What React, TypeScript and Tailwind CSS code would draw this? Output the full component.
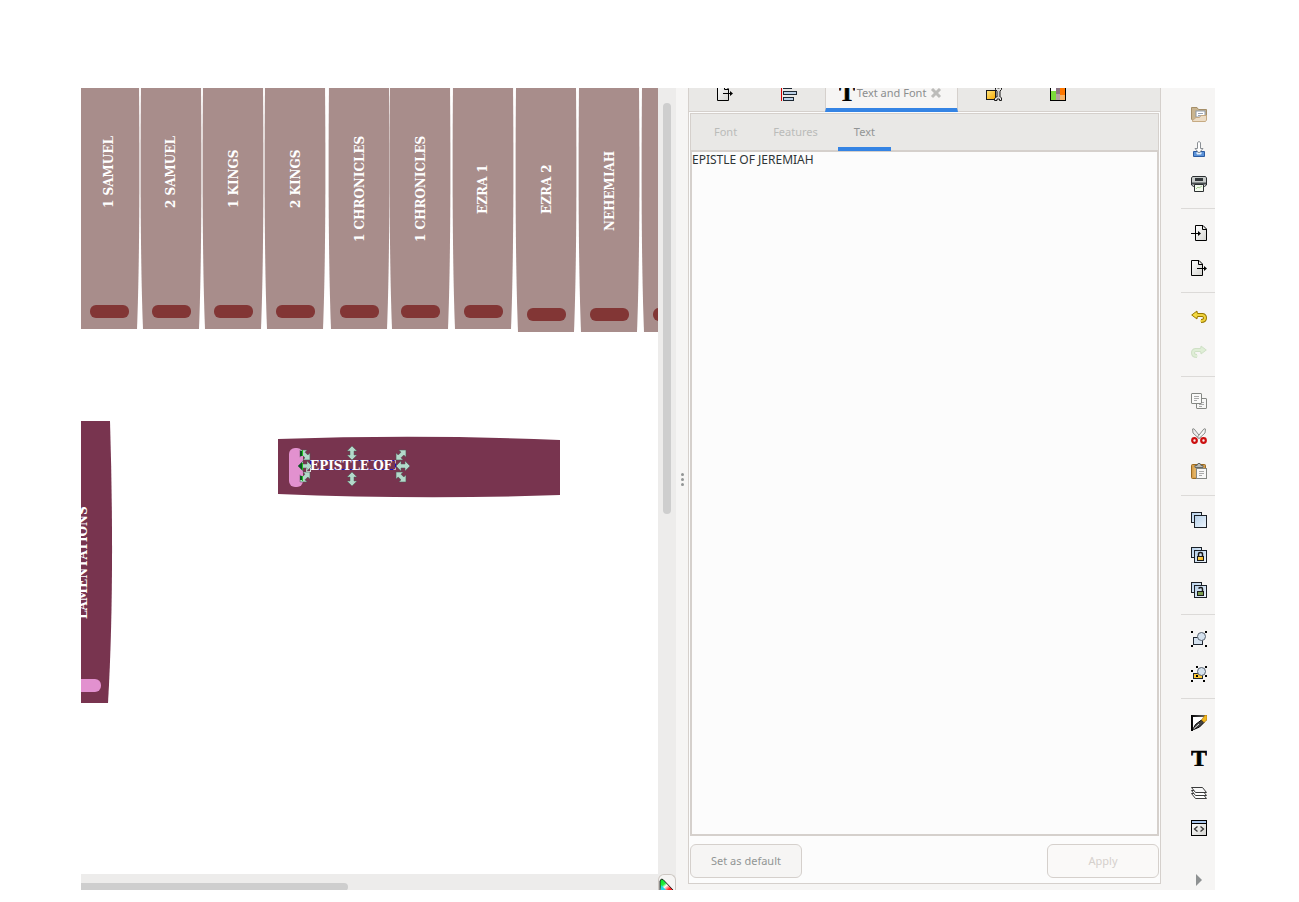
import type { ReactNode } from 'react';

const books = [
  { title: '1 SAMUEL', x: -2, y: 0, textX: 34, start: 120 },
  { title: '2 SAMUEL', x: 60, y: 0, textX: 34, start: 120 },
  { title: '1 KINGS', x: 122, y: 0, textX: 35, start: 120 },
  { title: '2 KINGS', x: 184, y: 0, textX: 35, start: 120 },
  { title: '1 CHRONICLES', x: 248, y: 0, textX: 35, start: 154 },
  { title: '1 CHRONICLES', x: 309, y: 0, textX: 35, start: 154 },
  { title: 'EZRA 1', x: 372, y: 0, textX: 34, start: 126 },
  { title: 'EZRA 2', x: 435, y: 3, textX: 35, start: 126 },
  { title: 'NEHEMIAH', x: 498, y: 3, textX: 35, start: 143 },
  { title: '', x: 561, y: 3, textX: 35, start: 142 },
];

// Double headed arrow, centred on its own origin and pointing up and down
const arrowPath = 'M0 -7L5 -2H2V2H5L0 7L-5 2H-2V-2H-5Z';

const handles = [
  { x: 271, y: 365, angle: 0 },
  { x: 271, y: 391, angle: 0 },
  { x: 322, y: 378, angle: 90 },
  { x: 320, y: 367, angle: 45 },
  { x: 320, y: 389, angle: -45 },
  { x: 224, y: 378, angle: 90 },
  { x: 224, y: 367, angle: -45 },
  { x: 224, y: 389, angle: 45 },
];

const Icon = ({ children }: { children: ReactNode }) => (
  <svg width="16" height="16" viewBox="0 0 16 16" fill="none" aria-hidden="true" className="shrink-0">
    {children}
  </svg>
);

const Gradients = () => (
  <svg width="0" height="0" className="absolute" aria-hidden="true">
    <defs>
      <linearGradient id="paper" x1="0" y1="0" x2="1" y2="1">
        <stop offset="0" stopColor="#ffffff" />
        <stop offset="1" stopColor="#d4d4d0" />
      </linearGradient>
      <linearGradient id="glass" x1="0" y1="0" x2="1" y2="1">
        <stop offset="0" stopColor="#b4cfe9" />
        <stop offset="1" stopColor="#eef5fc" />
      </linearGradient>
      <linearGradient id="gold" x1="0" y1="0" x2="1" y2="1">
        <stop offset="0" stopColor="#ffe680" />
        <stop offset="1" stopColor="#f5a800" />
      </linearGradient>
      <linearGradient id="edge" x1="0" y1="0" x2="1" y2="0">
        <stop offset="0" stopColor="#000000" />
        <stop offset="1" stopColor="#777777" />
      </linearGradient>
      <linearGradient id="wheel" x1="0" y1="0" x2="1" y2="1">
        <stop offset="0" stopColor="#00e020" />
        <stop offset="0.35" stopColor="#20f040" />
        <stop offset="0.5" stopColor="#ffffff" />
        <stop offset="0.75" stopColor="#ff2020" />
      </linearGradient>
    </defs>
  </svg>
);

const ExportIcon = () => (
  <Icon>
    <path d="M.5.500H8L11.500 4V15.500H.5Z" fill="url(#paper)" stroke="#000" />
    <path d="M7.500.5V4.500H11.500" stroke="#000" />
    <path d="M6 8.500H14" stroke="#000" />
    <path d="M13 6L16 8.500L13 11Z" fill="#000" />
  </Icon>
);

const ImportIcon = () => (
  <Icon>
    <path d="M4.500.5H12L15.500 4V15.500H4.500Z" fill="url(#paper)" stroke="#000" />
    <path d="M11.500.5V4.500H15.500" stroke="#000" />
    <path d="M0 8.500H8" stroke="#000" />
    <path d="M7 6L10 8.500L7 11Z" fill="#000" />
  </Icon>
);

const AlignIcon = () => (
  <Icon>
    <path d="M.5 0V16" stroke="#d40000" />
    <rect x="2.500" y=".5" width="8" height="3" fill="#b9cfe6" stroke="#1c2733" />
    <rect x="2.500" y="6.500" width="13" height="3" fill="#b9cfe6" stroke="#1c2733" />
    <rect x="2.500" y="12.500" width="10" height="3" fill="#b9cfe6" stroke="#1c2733" />
  </Icon>
);

const LetterIcon = () => (
  <Icon>
    <text x="8" y="16" textAnchor="middle" fill="#000" stroke="#000" strokeWidth=".6" className="font-['Liberation_Serif',serif] text-[24px] font-bold">
      T
    </text>
  </Icon>
);

const ObjectIcon = () => (
  <Icon>
    <rect x=".5" y="5.500" width="9" height="9" fill="url(#gold)" stroke="#1a1a1a" />
    <path d="M12.500 6V12" stroke="#1a1a1a" strokeWidth="4" />
    <path d="M9.500 1V4.500L11.500 6.500H13.500L15.500 4.500V1L13.500 3H11.500Z" fill="#e4e4e4" stroke="#1a1a1a" />
    <path d="M8.500 15.500V13.500L11 11.500H14L15.500 13V15.500H13.500V14H11V15.500Z" fill="#e4e4e4" stroke="#1a1a1a" />
    <path d="M12.500 5V13" stroke="#d0d0d0" strokeWidth="2" />
  </Icon>
);

const SwatchIcon = () => (
  <Icon>
    <rect x=".5" y=".5" width="15" height="15" fill="#fff" />
    <rect x="1" y="6" width="5" height="9" fill="#7ddb3c" />
    <rect x="6" y="2" width="4" height="8" fill="#8c7482" />
    <rect x="6" y="9" width="4" height="6" fill="#b5a0a0" />
    <rect x="10" y="3" width="5" height="7" fill="#ff7800" />
    <rect x="10" y="10" width="5" height="5" fill="#f7b264" />
    <rect x=".5" y=".5" width="15" height="15" stroke="#000" />
  </Icon>
);

const OpenIcon = () => (
  <Icon>
    <path d="M.5 13V1.500H6L7.500 3.500H15.500V10H9L3 14.500H1.500Z" fill="#c9b48f" stroke="#a58e68" />
    <rect x="5" y="5" width="9" height="6" fill="#fff" stroke="#8d99a8" />
    <path d="M7 7.500H12M7 9.500H12" stroke="#9aa5b5" />
    <path d="M1.500 14.500L5 11.500H8.500L10 9.500H15.500V14L14.500 15.500H1.500Z" fill="#ecdcc5" stroke="#c6aa82" />
  </Icon>
);

const SaveIcon = () => (
  <Icon>
    <path d="M2.500 10.500H13.500V15.500H2.500Z" fill="#5b92d8" stroke="#2c5ba0" />
    <path d="M5 11.500H11L10 13.500H6Z" fill="#e8f1fb" />
    <path d="M6.500 7.500V1.500L8 .5L9.500 1.500V7.500H12L8 12L4 7.500Z" fill="#fff" stroke="#8a8f94" />
  </Icon>
);

const PrintIcon = () => (
  <Icon>
    <path d="M1.500.5H14.500L15.500 2V9L13.500 10.500H2.500L.5 9V2Z" fill="#c8ccca" stroke="#2b2f31" />
    <rect x="4" y="2" width="8" height="3" fill="#33383a" />
    <path d="M1 7.500H15" stroke="#4b5052" strokeWidth="2" />
    <path d="M3.500 8.500H12.500V15.500H3.500Z" fill="#f4fbef" stroke="#2b2f31" />
    <path d="M5 13L7 11L8 12L11 10" stroke="#a5cc92" />
  </Icon>
);

const UndoIcon = () => (
  <Icon>
    <path d="M5 6H11.500Q14 6.500 14 9Q14 12 10 12" stroke="#9a7900" strokeWidth="4" />
    <path d="M6 2L.7 6L6 10V8H7V4H6Z" fill="#f4db44" stroke="#9a7900" />
    <path d="M5 6H11.500Q14 6.500 14 9Q14 12 9.500 12" stroke="#efd23c" strokeWidth="2" />
  </Icon>
);

const RedoIcon = () => (
  <Icon>
    <path d="M11 6H4.500Q2 6.500 2 9Q2 12 6 12" stroke="#cfe0c6" strokeWidth="4" />
    <path d="M10 2L15.300 6L10 10V8H9V4H10Z" fill="#dfeed6" stroke="#cfe0c6" />
    <path d="M11 6H4.500Q2 6.500 2 9Q2 12 6.500 12" stroke="#dfeed6" strokeWidth="2" />
  </Icon>
);

const CopyIcon = () => (
  <Icon>
    <rect x="5.500" y="5.500" width="10" height="10" rx=".5" fill="#f7f7f6" stroke="#858783" />
    <path d="M8 9.500H13M8 11.500H13M8 13.500H11" stroke="#aaa" />
    <rect x=".5" y=".5" width="10" height="10" rx=".5" fill="#fafaf9" stroke="#858783" />
    <path d="M3 3.500H8M3 5.500H8M3 7.500H6" stroke="#aaa" />
  </Icon>
);

const CutIcon = () => (
  <Icon>
    <path d="M1.500 1L3 .800L9.500 9L8 10.500L2 5Z" fill="#ececec" stroke="#8d8f8c" />
    <path d="M14.500 1L13 .800L6.500 9L8 10.500L14 5Z" fill="#f6f6f6" stroke="#8d8f8c" />
    <circle cx="3.500" cy="12.500" r="2.300" stroke="#cc1010" strokeWidth="2.200" />
    <circle cx="12.500" cy="12.500" r="2.300" stroke="#cc1010" strokeWidth="2.200" />
  </Icon>
);

const PasteIcon = () => (
  <Icon>
    <rect x=".5" y="1.500" width="14" height="14" rx="1" fill="#d8a04c" stroke="#9a6a22" />
    <rect x="2.500" y="4" width="10" height="10" fill="#e2b264" />
    <path d="M4 4.500V2.500H6L7 .5H9L10 2.500H12V4.500Z" fill="#b9bbb8" stroke="#666965" />
    <rect x="5.500" y="5.500" width="10" height="10" fill="#f8f8f7" stroke="#858783" />
    <path d="M8 8.500H13M8 10.500H13M8 12.500H11" stroke="#aaa" />
  </Icon>
);

const Duplicated = ({ children }: { children?: ReactNode }) => (
  <Icon>
    <rect x=".5" y=".5" width="10" height="10" fill="url(#glass)" stroke="#1a1f26" />
    <rect x="3.500" y="3.500" width="12" height="12" fill="url(#glass)" stroke="#1a1f26" />
    {children}
  </Icon>
);

const CloneIcon = () => (
  <Duplicated>
    <path d="M7.500 9V7Q7.500 5.500 9.500 5.500Q11.500 5.500 11.500 7V9" stroke="#1a1a1a" strokeWidth="1.500" />
    <rect x="6.500" y="9.500" width="6" height="4" fill="url(#gold)" stroke="#1a1a1a" />
  </Duplicated>
);

const UnlinkIcon = () => (
  <Duplicated>
    <path d="M7.500 6.500Q8.500 5.500 10 5.500Q11.500 5.500 11.500 7V9" stroke="#1a1a1a" strokeWidth="1.500" />
    <rect x="6.500" y="9.500" width="6" height="4" fill="#7a9c50" stroke="#1a1a1a" />
  </Duplicated>
);

const GroupIcon = () => (
  <Icon>
    <rect x="2.500" y="6.500" width="9" height="7" fill="#d5e2ef" stroke="#1f2630" />
    <circle cx="10.500" cy="5.500" r="4" fill="#d5e2ef" stroke="#5a6470" />
    <path d="M0 0H2V2H0ZM14 0H16V2H14ZM0 14H2V16H0ZM14 14H16V16H14Z" fill="#000" />
  </Icon>
);

const UngroupIcon = () => (
  <Icon>
    <rect x="2.500" y="7.500" width="9" height="5" fill="#ffc933" stroke="#1f2630" />
    <circle cx="10.500" cy="5.500" r="4" fill="#d5e2ef" stroke="#5a6470" />
    <path d="M5 0H7V2H5ZM14 0H16V2H14ZM0 4H2V6H0ZM14 9H16V11H14ZM5 9H7V11H5ZM0 14H2V16H0ZM12 14H14V16H12Z" fill="#000" />
  </Icon>
);

const FillIcon = () => (
  <Icon>
    <path d="M0 0H16V2H2V16H0Z" fill="url(#edge)" />
    <path d="M2 2H14L2 14Z" fill="#fff" />
    <path d="M1.500 15L4.500 9.500L10.500 5L13 7.500L8.500 12Z" fill="#444" stroke="#000" />
    <path d="M2.500 14L8 9" stroke="#ddd" />
    <path d="M10.500 5L14 0H16V5L13 7.500Z" fill="#f2b71c" stroke="#8c5a00" strokeWidth=".5" />
  </Icon>
);

const LayersIcon = () => (
  <Icon>
    <path d="M.5 8.500H11.500L15.500 13.500H4.500Z" fill="#fff" stroke="#3b3b3b" />
    <path d="M.5 5.500H11.500L15.500 10.500H4.500Z" fill="#fff" stroke="#3b3b3b" />
    <path d="M.5 2.500H11.500L15.500 7.500H4.500Z" fill="#f7f7f7" stroke="#3b3b3b" />
  </Icon>
);

const XmlIcon = () => (
  <Icon>
    <rect x=".5" y=".5" width="15" height="15" fill="url(#paper)" stroke="#000" />
    <rect x="1" y="1" width="14" height="2" fill="#a9c5ea" />
    <path d="M1 3.500H15" stroke="#000" />
    <path d="M6.500 6.500L3.500 9L6.500 11.500M9.500 6.500L12.500 9L9.500 11.500" stroke="#333" strokeWidth="1.300" />
  </Icon>
);

const toolGroups = [
  [
    { label: 'Open', icon: <OpenIcon /> },
    { label: 'Save', icon: <SaveIcon /> },
    { label: 'Print', icon: <PrintIcon /> },
  ],
  [
    { label: 'Import', icon: <ImportIcon /> },
    { label: 'Export', icon: <ExportIcon /> },
  ],
  [
    { label: 'Undo', icon: <UndoIcon /> },
    { label: 'Redo', icon: <RedoIcon /> },
  ],
  [
    { label: 'Copy', icon: <CopyIcon /> },
    { label: 'Cut', icon: <CutIcon /> },
    { label: 'Paste', icon: <PasteIcon /> },
  ],
  [
    { label: 'Duplicate', icon: <Duplicated /> },
    { label: 'Clone', icon: <CloneIcon /> },
    { label: 'Unlink clone', icon: <UnlinkIcon /> },
  ],
  [
    { label: 'Group', icon: <GroupIcon /> },
    { label: 'Ungroup', icon: <UngroupIcon /> },
  ],
  [
    { label: 'Fill and stroke', icon: <FillIcon /> },
    { label: 'Text and font', icon: <LetterIcon /> },
    { label: 'Layers', icon: <LayersIcon /> },
    { label: 'XML editor', icon: <XmlIcon /> },
  ],
];

const Drawing = () => (
  <svg className="h-full w-full font-['DejaVu_Serif',serif] text-[12px] font-bold" role="img" aria-label="Drawing of book spines">
    {books.map((book, i) => (
      <g key={i} transform={`translate(${book.x} ${book.y})`}>
        <path d="M0 -4C-1 110 0 190 2 241H58C60 190 61 110 60 -4Z" fill="#a88d8b" />
        <rect x="11" y="217" width="39" height="13" rx="6" fill="#823635" />
        <text transform={`translate(${book.textX} ${book.start - book.y}) rotate(-90)`} fill="#fff">
          {book.title}
        </text>
      </g>
    ))}

    <path d="M-30 333H29C32 430 32 530 27 615H-30Z" fill="#78344f" />
    <rect x="-20" y="591" width="40" height="13" rx="6" fill="#e291cf" />
    <text transform="translate(6 531) rotate(-90)" fill="#fff">
      LAMENTATIONS
    </text>

    <path d="M197 351Q340 346 479 352V407Q340 412 197 406Z" fill="#78344f" />
    <rect x="208" y="360" width="14" height="39" rx="6" fill="#e291cf" />
    <rect x="229.500" y="372.500" width="85" height="9" fill="none" stroke="#fff" strokeOpacity=".6" />
    <rect x="229.500" y="372.500" width="85" height="9" fill="none" stroke="#1d10b8" strokeDasharray="4 4" />
    <text x="229" y="382" fill="#fff">
      EPISTLE OF
    </text>
    <rect x="225.500" y="379.500" width="4" height="4" fill="none" stroke="#ddd" />
    {handles.map((h, i) => (
      <path key={i} d={arrowPath} transform={`translate(${h.x} ${h.y}) rotate(${h.angle})`} fill="#b3d9ca" stroke="#4d5a55" strokeWidth=".5" />
    ))}
    <path d="M217 378L221 374V382ZM219 363H222V368H219ZM219 388H222V392H219Z" fill="#0f5226" />
    <path d="M221.500 362V368M221.500 375V382M221.500 388V393" stroke="#1fc21f" />
  </svg>
);

const Canvas = () => (
  <main className="flex min-w-0 flex-1">
    <div className="flex min-w-0 flex-1 flex-col">
      <div className="min-h-0 flex-1 overflow-hidden bg-white">
        <Drawing />
      </div>
      <div className="h-4 overflow-hidden bg-[#edeceb] pt-[9px]">
        <div className="h-2 w-[267px] rounded-r-full bg-[#cecece]" />
      </div>
    </div>
    <div className="flex w-[18px] flex-col bg-[#edeceb]">
      <div className="flex-1 px-[5px] pt-[15px]">
        <div className="h-[411px] w-2 rounded-full bg-[#cecece]" />
      </div>
      <button aria-label="Color management" className="h-4 overflow-hidden rounded-t-md border border-b-0 border-[#cdc7c2] bg-[#f6f5f4]">
        <svg width="16" height="15" viewBox="0 0 16 15" aria-hidden="true">
          <path d="M1 16V6Q2 3 4 4.500L15 16Z" fill="url(#wheel)" stroke="#222" />
          <path d="M2 15V10L7 15Z" fill="#19d8e8" />
        </svg>
      </button>
    </div>
  </main>
);

const TextPanel = () => (
  <section className="flex w-[473px] shrink-0 flex-col pb-1.5">
    <div className="flex min-h-0 flex-1 flex-col border border-t-0 border-[#d5d0cc] bg-[#fcfcfc]">
      <div className="flex h-6 items-end overflow-hidden bg-[#e9e8e6] pl-1 shadow-[inset_0_-1px_#d5d0cc]">
        <button aria-label="Export" className="flex h-[38px] w-16 shrink-0 items-center justify-center">
          <ExportIcon />
        </button>
        <button aria-label="Align" className="flex h-[38px] w-16 shrink-0 items-center justify-center">
          <AlignIcon />
        </button>
        <button className="mx-1 flex h-[34px] w-[133px] shrink-0 items-center justify-center gap-0.5 border-x border-b-4 border-x-[#d5d0cc] border-b-[#3584e4] bg-[#f6f5f4] text-[#8b8e8f]">
          <LetterIcon />
          <span>Text and Font</span>
          <svg width="16" height="12" viewBox="0 0 16 12" aria-hidden="true">
            <path d="M4 2L12 10M12 2L4 10" stroke="#bcbcba" strokeWidth="3" />
          </svg>
        </button>
        <button aria-label="Object properties" className="flex h-[38px] w-16 shrink-0 items-center justify-center">
          <ObjectIcon />
        </button>
        <button aria-label="Swatches" className="flex h-[38px] w-16 shrink-0 items-center justify-center">
          <SwatchIcon />
        </button>
      </div>

      <div className="mx-px mt-px flex h-[37px] gap-1 border border-b-0 border-[#d5d0cc] bg-[#e9e8e6] pl-[7px] text-[#babbb9]">
        <button className="px-4">Font</button>
        <button className="px-4">Features</button>
        <button className="relative -mb-px border-b-4 border-[#3584e4] px-4 pt-[3px] text-[#929595]">Text</button>
      </div>
      <textarea
        aria-label="Text"
        defaultValue="EPISTLE OF JEREMIAH"
        spellCheck={false}
        className="mx-px min-h-0 flex-1 resize-none border-2 border-[#d5d0cc] bg-[#fcfcfc] text-[12px] leading-4 text-[#2e3436] outline-none"
      />
      <div className="flex justify-between px-px pt-2 pb-[5px]">
        <button className="h-[34px] w-28 rounded-md border border-[#d5d0cc] bg-[#f6f5f4] text-[#929595]">Set as default</button>
        <button disabled className="h-[34px] w-28 rounded-md border border-[#d5d0cc] bg-[#faf9f8] text-[#d5d0cc]">
          Apply
        </button>
      </div>
    </div>
  </section>
);

const Toolbar = () => (
  <aside className="flex w-[54px] shrink-0 flex-col items-end pt-[9px]">
    {toolGroups.map((group, i) => (
      <div key={i} className="w-[34px]">
        {i > 0 && <div className="mt-[6px] mb-[7px] h-px bg-[#dcdad8]" />}
        {group.map((tool) => (
          <button key={tool.label} aria-label={tool.label} className="flex h-[35px] w-full items-start pt-[9px] pl-2.5">
            {tool.icon}
          </button>
        ))}
      </div>
    ))}
    <button aria-label="More tools" className="mt-auto w-[34px] pb-1 pl-[15px]">
      <svg width="6" height="12" viewBox="0 0 6 12" aria-hidden="true">
        <path d="M0 0L6 6L0 12Z" fill="#8e9192" />
      </svg>
    </button>
  </aside>
);

const App = () => {
  return (
    <div className="h-screen bg-white pt-22 pr-21 pb-3 pl-[81px] font-['Noto_Sans',sans-serif] text-[11px] leading-4">
      <Gradients />
      <div className="flex h-full overflow-hidden bg-[#f6f5f4]">
        <Canvas />
        <div className="flex w-3 shrink-0 flex-col items-center justify-center gap-0.5 pb-5">
          <span className="size-[3px] rounded-full bg-[#929595]" />
          <span className="size-[3px] rounded-full bg-[#929595]" />
          <span className="size-[3px] rounded-full bg-[#929595]" />
        </div>
        <TextPanel />
        <Toolbar />
      </div>
    </div>
  );
};

export default App;
